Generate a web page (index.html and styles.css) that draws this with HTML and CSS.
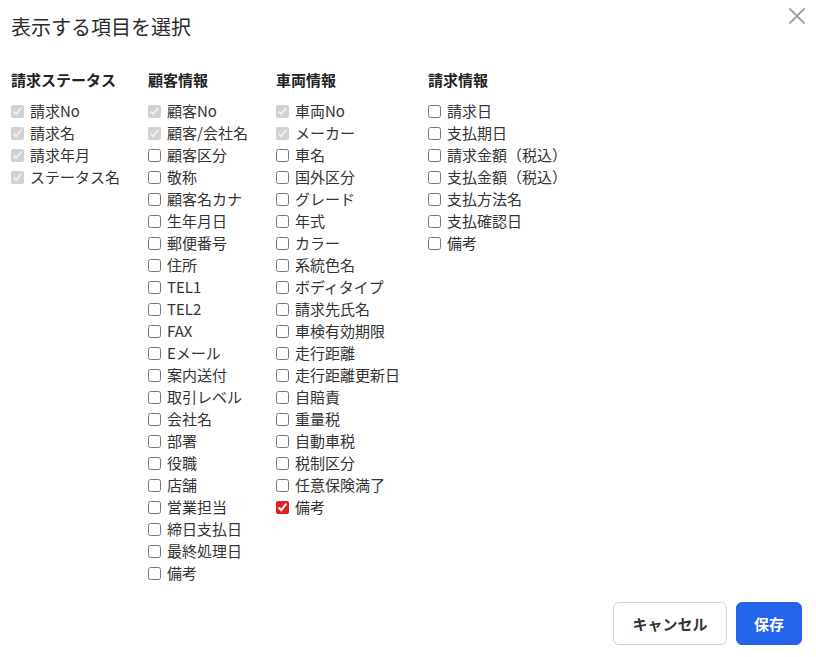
FILE: index.html
```html
<!DOCTYPE html>
<html lang="ja">
<head>
<meta charset="utf-8">
<link rel="stylesheet" href="styles.css">
</head>
<body>
<div class="dialog">
  <div class="header">
    <h1 class="title">表示する項目を選択</h1>
    <button class="close" aria-label="閉じる">
      <svg width="16" height="16" viewBox="0 0 16 16"><path d="M1 1L15 15M15 1L1 15" stroke="#9ca3af" stroke-width="1.8" fill="none" stroke-linecap="round"/></svg>
    </button>
  </div>
  <div class="columns">
    <div class="col">
      <h2 class="col-title">請求ステータス</h2>
      <label class="item"><input type="checkbox" checked disabled>請求No</label>
      <label class="item"><input type="checkbox" checked disabled>請求名</label>
      <label class="item"><input type="checkbox" checked disabled>請求年月</label>
      <label class="item"><input type="checkbox" checked disabled>ステータス名</label>
    </div>
    <div class="col">
      <h2 class="col-title">顧客情報</h2>
      <label class="item"><input type="checkbox" checked disabled>顧客No</label>
      <label class="item"><input type="checkbox" checked disabled>顧客/会社名</label>
      <label class="item"><input type="checkbox">顧客区分</label>
      <label class="item"><input type="checkbox">敬称</label>
      <label class="item"><input type="checkbox">顧客名カナ</label>
      <label class="item"><input type="checkbox">生年月日</label>
      <label class="item"><input type="checkbox">郵便番号</label>
      <label class="item"><input type="checkbox">住所</label>
      <label class="item"><input type="checkbox">TEL1</label>
      <label class="item"><input type="checkbox">TEL2</label>
      <label class="item"><input type="checkbox">FAX</label>
      <label class="item"><input type="checkbox">Eメール</label>
      <label class="item"><input type="checkbox">案内送付</label>
      <label class="item"><input type="checkbox">取引レベル</label>
      <label class="item"><input type="checkbox">会社名</label>
      <label class="item"><input type="checkbox">部署</label>
      <label class="item"><input type="checkbox">役職</label>
      <label class="item"><input type="checkbox">店舗</label>
      <label class="item"><input type="checkbox">営業担当</label>
      <label class="item"><input type="checkbox">締日支払日</label>
      <label class="item"><input type="checkbox">最終処理日</label>
      <label class="item"><input type="checkbox">備考</label>
    </div>
    <div class="col">
      <h2 class="col-title">車両情報</h2>
      <label class="item"><input type="checkbox" checked disabled>車両No</label>
      <label class="item"><input type="checkbox" checked disabled>メーカー</label>
      <label class="item"><input type="checkbox">車名</label>
      <label class="item"><input type="checkbox">国外区分</label>
      <label class="item"><input type="checkbox">グレード</label>
      <label class="item"><input type="checkbox">年式</label>
      <label class="item"><input type="checkbox">カラー</label>
      <label class="item"><input type="checkbox">系統色名</label>
      <label class="item"><input type="checkbox">ボディタイプ</label>
      <label class="item"><input type="checkbox">請求先氏名</label>
      <label class="item"><input type="checkbox">車検有効期限</label>
      <label class="item"><input type="checkbox">走行距離</label>
      <label class="item"><input type="checkbox">走行距離更新日</label>
      <label class="item"><input type="checkbox">自賠責</label>
      <label class="item"><input type="checkbox">重量税</label>
      <label class="item"><input type="checkbox">自動車税</label>
      <label class="item"><input type="checkbox">税制区分</label>
      <label class="item"><input type="checkbox">任意保険満了</label>
      <label class="item"><input type="checkbox" class="red" checked>備考</label>
    </div>
    <div class="col">
      <h2 class="col-title">請求情報</h2>
      <label class="item"><input type="checkbox">請求日</label>
      <label class="item"><input type="checkbox">支払期日</label>
      <label class="item"><input type="checkbox">請求金額（税込）</label>
      <label class="item"><input type="checkbox">支払金額（税込）</label>
      <label class="item"><input type="checkbox">支払方法名</label>
      <label class="item"><input type="checkbox">支払確認日</label>
      <label class="item"><input type="checkbox">備考</label>
    </div>
  </div>
  <div class="footer">
    <button class="btn btn-cancel">キャンセル</button>
    <button class="btn btn-save">保存</button>
  </div>
</div>
</body>
</html>
```
FILE: styles.css
```css
* { box-sizing: border-box; }
html, body {
  margin: 0;
  padding: 0;
  background: #fff;
}
body {
  font-family: "Noto Sans CJK JP", "Noto Sans", sans-serif;
  color: #333;
}
.dialog {
  height: 657px;
  display: flex;
  flex-direction: column;
  padding: 13px 14px 12px 11px;
}
.header {
  display: flex;
  justify-content: space-between;
  align-items: flex-start;
}
.title {
  margin: 0;
  font-size: 20px;
  font-weight: 400;
  line-height: 28px;
  color: #2b2b2b;
}
.close {
  background: none;
  border: 0;
  padding: 0;
  margin: -5px -3px 0 0;
  width: 16px;
  height: 16px;
  cursor: pointer;
}
.columns {
  display: flex;
  gap: 28px;
  margin-top: 28px;
}
.col {
  display: flex;
  flex-direction: column;
}
.col-title {
  margin: 0 0 9px;
  font-size: 15px;
  font-weight: 700;
  line-height: 22px;
  color: #222;
}
.item {
  display: flex;
  align-items: center;
  gap: 6px;
  font-size: 15px;
  line-height: 22px;
  height: 22px;
  color: #333;
  white-space: nowrap;
}
.item input {
  margin: 0;
  width: 13px;
  height: 13px;
}
.item input.red {
  accent-color: #e02020;
}
.footer {
  margin-top: auto;
  display: flex;
  justify-content: flex-end;
  gap: 9px;
}
.btn {
  height: 43px;
  border-radius: 6px;
  font-family: "Noto Sans CJK JP", "Noto Sans", sans-serif;
  font-size: 15px;
  font-weight: 700;
  padding: 0 17px;
  cursor: pointer;
}
.btn-cancel {
  width: 114px;
  background: #fff;
  border: 1px solid #d1d5db;
  color: #333;
}
.btn-save {
  width: 66px;
  background: #2563eb;
  border: 1px solid #2563eb;
  color: #fff;
}
```
